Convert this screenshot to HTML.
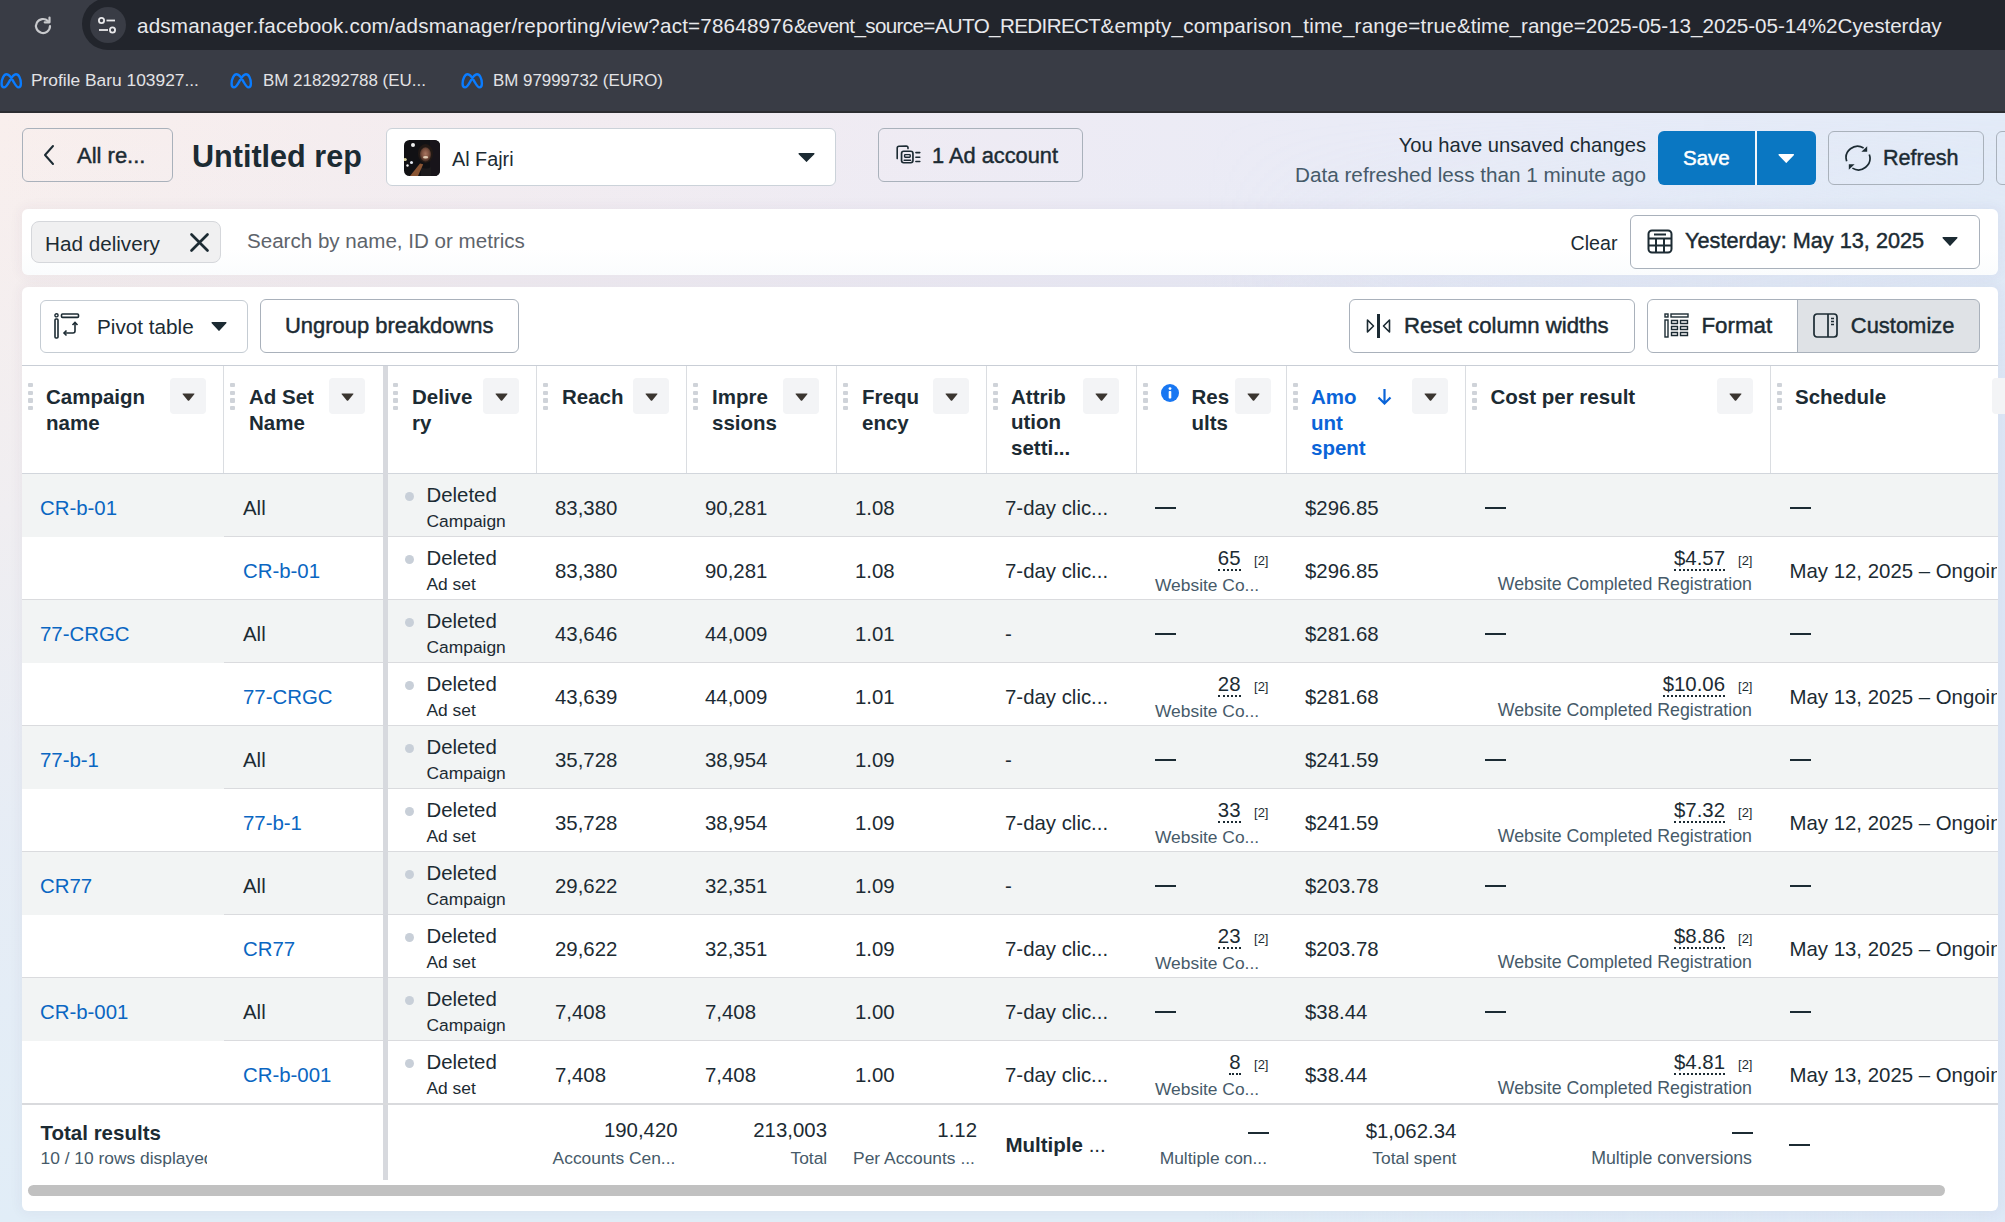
<!DOCTYPE html><html><head><meta charset="utf-8"><style>
html,body{margin:0;padding:0;}
body{width:2005px;height:1222px;position:relative;overflow:hidden;font-family:"Liberation Sans",sans-serif;background:#fff;}
.t{position:absolute;white-space:nowrap;line-height:1;}
.a{position:absolute;}
</style></head><body>
<div style="position:absolute;left:0px;top:0px;width:2005px;height:112px;background:#393c45;"></div>
<div style="position:absolute;left:82px;top:-2px;width:1960px;height:52px;background:#22252c;border-radius:26px;"></div>
<div style="position:absolute;left:0px;top:111px;width:2005px;height:2px;background:#2c2d31;"></div>
<svg class="a" style="left:31px;top:14px" width="24" height="24" viewBox="0 0 24 24"><path d="M19 12a7 7 0 1 1-2.05-4.95" fill="none" stroke="#c8c9cc" stroke-width="2.2" stroke-linecap="round"/><path d="M18.5 3.5v4.8h-4.8" fill="none" stroke="#c8c9cc" stroke-width="2.2" stroke-linecap="round" stroke-linejoin="round"/></svg>
<div style="position:absolute;left:90px;top:7px;width:36px;height:36px;background:#393c45;border-radius:50%;"></div>
<svg class="a" style="left:97px;top:16px" width="22" height="20" viewBox="0 0 22 20"><circle cx="4.5" cy="4.5" r="2.6" fill="none" stroke="#e8e8ea" stroke-width="1.8"/><line x1="9.5" y1="4.5" x2="18" y2="4.5" stroke="#e8e8ea" stroke-width="1.8"/><line x1="2" y1="14" x2="11" y2="14" stroke="#e8e8ea" stroke-width="1.8"/><circle cx="15.5" cy="14" r="2.6" fill="none" stroke="#e8e8ea" stroke-width="1.8"/></svg>
<div class="t" style="left:137px;top:15.53px;font-size:20.64px;font-weight:400;color:#e8e9ec;letter-spacing:0.187px;">adsmanager.facebook.com/adsmanager/reporting/view?act=78648976</div>
<div class="t" style="left:794px;top:15.53px;font-size:20.64px;font-weight:400;color:#e8e9ec;letter-spacing:-0.636px;">&amp;event_source=AUTO_REDIRECT</div>
<div class="t" style="left:1100.5px;top:15.53px;font-size:20.64px;font-weight:400;color:#e8e9ec;letter-spacing:0.182px;">&amp;empty_comparison_time_range=true</div>
<div class="t" style="left:1457px;top:15.53px;font-size:20.64px;font-weight:400;color:#e8e9ec;letter-spacing:-0.021px;">&amp;time_range=2025-05-13_2025-05-14%2Cyesterday</div>
<svg class="a" style="left:-1px;top:71.5px" width="24" height="18" viewBox="0 0 24 18"><path d="M2.6 11.8C2.6 6.5 5 2.3 7.6 2.3c2.6 0 4.6 3.2 6.6 6.8 2 3.6 3.3 6.3 5.3 6.3 1.6 0 2.4-1.5 2.4-3.8 0-5.2-2.3-9.3-4.9-9.3-2.5 0-4.5 3.2-6.5 6.8-2 3.6-3.4 6.3-5.5 6.3-1.6 0-2.4-1.4-2.4-3.6z" fill="none" stroke="#0a7cff" stroke-width="2.4" stroke-linejoin="round"/></svg>
<div class="t" style="left:31px;top:72.30px;font-size:17.37px;font-weight:400;color:#e3e3e6;">Profile Baru 103927...</div>
<svg class="a" style="left:229px;top:71.5px" width="24" height="18" viewBox="0 0 24 18"><path d="M2.6 11.8C2.6 6.5 5 2.3 7.6 2.3c2.6 0 4.6 3.2 6.6 6.8 2 3.6 3.3 6.3 5.3 6.3 1.6 0 2.4-1.5 2.4-3.8 0-5.2-2.3-9.3-4.9-9.3-2.5 0-4.5 3.2-6.5 6.8-2 3.6-3.4 6.3-5.5 6.3-1.6 0-2.4-1.4-2.4-3.6z" fill="none" stroke="#0a7cff" stroke-width="2.4" stroke-linejoin="round"/></svg>
<div class="t" style="left:263px;top:72.66px;font-size:16.94px;font-weight:400;color:#e3e3e6;">BM 218292788 (EU...</div>
<svg class="a" style="left:460px;top:71.5px" width="24" height="18" viewBox="0 0 24 18"><path d="M2.6 11.8C2.6 6.5 5 2.3 7.6 2.3c2.6 0 4.6 3.2 6.6 6.8 2 3.6 3.3 6.3 5.3 6.3 1.6 0 2.4-1.5 2.4-3.8 0-5.2-2.3-9.3-4.9-9.3-2.5 0-4.5 3.2-6.5 6.8-2 3.6-3.4 6.3-5.5 6.3-1.6 0-2.4-1.4-2.4-3.6z" fill="none" stroke="#0a7cff" stroke-width="2.4" stroke-linejoin="round"/></svg>
<div class="t" style="left:493px;top:72.69px;font-size:16.9px;font-weight:400;color:#e3e3e6;">BM 97999732 (EURO)</div>
<div class="a" style="left:0;top:113px;width:2005px;height:1109px;background:linear-gradient(90deg,#f9efed 0%,#f3ecf0 25%,#eeebf4 50%,#e8ebf7 75%,#e3ebf8 100%);"></div>
<div class="a" style="left:0;top:113px;width:2005px;height:1109px;background:linear-gradient(180deg,rgba(224,236,248,0) 0%,rgba(224,236,248,0.35) 35%,rgba(224,236,248,0.75) 65%,rgba(225,237,247,1) 100%);"></div>
<div class="a" style="left:0;top:113px;width:2005px;height:1109px;background:linear-gradient(90deg,rgba(220,231,246,0) 60%,rgba(220,231,246,0.8) 100%);-webkit-mask-image:linear-gradient(180deg,transparent 0%,#000 25%);mask-image:linear-gradient(180deg,transparent 0%,#000 25%);"></div>
<div style="position:absolute;left:22px;top:128px;width:151px;height:54px;box-sizing:border-box;background:transparent;border:1px solid #a9b1bb;border-radius:6px;"></div>
<svg class="a" style="left:42px;top:144px" width="14" height="22" viewBox="0 0 14 22"><path d="M11 2L3 11l8 9" fill="none" stroke="#1c2b33" stroke-width="2" stroke-linecap="round" stroke-linejoin="round"/></svg>
<div class="t" style="left:77px;top:144.88px;font-size:22.0px;font-weight:400;color:#1c2b33;-webkit-text-stroke:0.45px #1c2b33;">All re...</div>
<div class="t" style="left:192px;top:141.11px;font-size:30.58px;font-weight:700;color:#1c2b33;">Untitled rep</div>
<div style="position:absolute;left:386px;top:128px;width:450px;height:58px;box-sizing:border-box;background:#fff;border:1px solid #cbd2d9;border-radius:6px;"></div>
<svg class="a" style="left:404px;top:140px" width="36" height="36" viewBox="0 0 36 36"><defs><clipPath id="avc"><rect width="36" height="36" rx="5.5"/></clipPath><radialGradient id="fg" cx="0.5" cy="0.45" r="0.55"><stop offset="0" stop-color="#a87560"/><stop offset="0.6" stop-color="#7a4f3e"/><stop offset="1" stop-color="#3a261e"/></radialGradient></defs><g clip-path="url(#avc)"><rect width="36" height="36" fill="#111114"/><rect x="26" y="0" width="10" height="36" fill="#18141a"/><ellipse cx="21.5" cy="13.5" rx="7.5" ry="9.5" fill="#221915"/><ellipse cx="21.5" cy="14.5" rx="5.6" ry="7.2" fill="url(#fg)"/><ellipse cx="21.6" cy="17.3" rx="2.6" ry="1.2" fill="#e2ccb4"/><path d="M17 27q5 3 10 0v9H17z" fill="#1c1a1c"/><path d="M6 36l10-12.5 3.2 0.8-5.2 11.7z" fill="#8a5533"/><circle cx="9" cy="5" r="2" fill="#f0f0f0"/><circle cx="1.2" cy="19.5" r="1.6" fill="#dcd6a0"/><circle cx="7.5" cy="22.5" r="1.5" fill="#e8eef5"/><circle cx="3.5" cy="25.5" r="1.2" fill="#f5f5f5"/></g></svg>
<div class="t" style="left:452px;top:150.23px;font-size:19.81px;font-weight:400;color:#1c2b33;">Al Fajri</div>
<svg class="a" style="left:798px;top:153px" width="17" height="9.5" viewBox="0 0 17 9.5"><path d="M1.14 0H15.86Q17 0 16.32 1.37L9.30 8.36Q8.5 9.5 7.70 8.36L0.68 1.37Q0 0 1.14 0z" fill="#1c2b33"/></svg>
<div style="position:absolute;left:878px;top:128px;width:205px;height:54px;box-sizing:border-box;background:transparent;border:1px solid #a9b1bb;border-radius:6px;"></div>
<svg class="a" style="left:895px;top:144px" width="26" height="21" viewBox="0 0 26 21"><path d="M2.2 14.6V4.2Q2.2 2.4 4 2.3L11.2 2Q13 2 13 3.8V4.6" fill="none" stroke="#1c2b33" stroke-width="1.6" stroke-linecap="round"/><rect x="6.55" y="7.25" width="11.4" height="11.5" rx="2.2" fill="none" stroke="#1c2b33" stroke-width="1.7"/><rect x="9.6" y="10.6" width="5.6" height="2.6" rx="0.6" fill="none" stroke="#1c2b33" stroke-width="1.4"/><path d="M9.2 16.2h6.4M20.9 8.6h3.9M20.9 13.3h3.9M20.9 17.5h3.9" stroke="#1c2b33" stroke-width="1.6" stroke-linecap="round"/></svg>
<div class="t" style="left:932px;top:144.55px;font-size:21.8px;font-weight:400;color:#1c2b33;-webkit-text-stroke:0.45px #1c2b33;">1 Ad account</div>
<div class="t" style="right:359px;top:134.70px;font-size:20.2px;font-weight:400;color:#1c2b33;">You have unsaved changes</div>
<div class="t" style="right:359px;top:164.67px;font-size:20.71px;font-weight:400;color:#465a69;">Data refreshed less than 1 minute ago</div>
<div style="position:absolute;left:1658px;top:131px;width:158px;height:54px;background:#0a77c2;border-radius:6px;"></div>
<div style="position:absolute;left:1755px;top:131px;width:1.5px;height:54px;background:#f2f6fa;"></div>
<div class="t" style="left:1683px;top:147.65px;font-size:20.5px;font-weight:400;color:#fff;-webkit-text-stroke:0.5px #fff;">Save</div>
<svg class="a" style="left:1778px;top:153.5px" width="16.5" height="9.5" viewBox="0 0 16.5 9.5"><path d="M1.14 0H15.36Q16.5 0 15.82 1.37L9.05 8.36Q8.25 9.5 7.45 8.36L0.68 1.37Q0 0 1.14 0z" fill="#fff"/></svg>
<div style="position:absolute;left:1828px;top:131px;width:156px;height:54px;box-sizing:border-box;background:transparent;border:1px solid #a9b1bb;border-radius:6px;"></div>
<svg class="a" style="left:1845px;top:145px" width="26" height="26" viewBox="0 0 26 26"><path d="M1.7 16.3A11.5 11.5 0 0 1 18.6 2.9" fill="none" stroke="#1c2b33" stroke-width="1.7"/><path d="M22.2 1.2V6.8H16.4z" fill="#1c2b33"/><path d="M24.3 9.6A11.5 11.5 0 0 1 7.4 23.1" fill="none" stroke="#1c2b33" stroke-width="1.7"/><path d="M3.8 24.8V19.2H9.6z" fill="#1c2b33"/></svg>
<div class="t" style="left:1883px;top:146.72px;font-size:21.6px;font-weight:400;color:#1c2b33;-webkit-text-stroke:0.45px #1c2b33;">Refresh</div>
<div style="position:absolute;left:1996px;top:131px;width:40px;height:54px;box-sizing:border-box;background:transparent;border:1px solid #a9b1bb;border-radius:6px;"></div>
<div style="position:absolute;left:22px;top:209px;width:1976px;height:66px;background:linear-gradient(180deg,#fff 60%,#fafcfd 100%);border-radius:6px;box-shadow:0 0 12px 3px rgba(70,50,90,0.045);"></div>
<div style="position:absolute;left:31px;top:221px;width:190px;height:42px;box-sizing:border-box;background:#f0f0f1;border:1px solid #d5d7db;border-radius:8px;"></div>
<div class="t" style="left:45px;top:233.99px;font-size:20.68px;font-weight:400;color:#1c2b33;">Had delivery</div>
<svg class="a" style="left:189px;top:232px" width="21" height="21" viewBox="0 0 21 21"><path d="M2.5 2.5l16 16M18.5 2.5l-16 16" stroke="#1c2b33" stroke-width="2.7" stroke-linecap="round"/></svg>
<div class="t" style="left:247px;top:231.07px;font-size:20.59px;font-weight:400;color:#5e646b;">Search by name, ID or metrics</div>
<div class="t" style="left:1570.5px;top:233.95px;font-size:19.67px;font-weight:400;color:#1c2b33;">Clear</div>
<div style="position:absolute;left:1630px;top:215px;width:350px;height:54px;box-sizing:border-box;background:#fff;border:1px solid #a9b1bb;border-radius:6px;"></div>
<svg class="a" style="left:1647px;top:229px" width="26" height="25" viewBox="0 0 26 25"><rect x="1.5" y="1.5" width="23" height="22" rx="3.5" fill="none" stroke="#1c2b33" stroke-width="2"/><path d="M1.5 9.5h23M1.5 16.5h23M9 9.5v14M17 9.5v14M7 5.5h12" stroke="#1c2b33" stroke-width="2"/></svg>
<div class="t" style="left:1685px;top:230.33px;font-size:21.7px;font-weight:400;color:#1c2b33;-webkit-text-stroke:0.45px #1c2b33;">Yesterday: May 13, 2025</div>
<svg class="a" style="left:1942px;top:237px" width="16" height="9.5" viewBox="0 0 16 9.5"><path d="M1.14 0H14.86Q16 0 15.32 1.37L8.80 8.36Q8.0 9.5 7.20 8.36L0.68 1.37Q0 0 1.14 0z" fill="#1c2b33"/></svg>
<div style="position:absolute;left:22px;top:287px;width:1976px;height:924px;background:#fff;border-radius:6px;box-shadow:0 0 12px 3px rgba(70,50,90,0.045);"></div>
<div style="position:absolute;left:40px;top:300px;width:208px;height:53px;box-sizing:border-box;background:transparent;border:1px solid #c5ccd3;border-radius:6px;"></div>
<svg class="a" style="left:54px;top:313px" width="26" height="26" viewBox="0 0 26 26"><rect x="1" y="6" width="3" height="19" rx="1" fill="none" stroke="#1c2b33" stroke-width="1.6"/><circle cx="2.5" cy="2.3" r="1.6" fill="none" stroke="#1c2b33" stroke-width="1.4"/><rect x="7.5" y="1" width="17" height="3.4" rx="1" fill="none" stroke="#1c2b33" stroke-width="1.6"/><path d="M21 10v8a2 2 0 0 1-2 2h-9" fill="none" stroke="#1c2b33" stroke-width="1.6"/><path d="M18.5 12l2.5-2.5 2.5 2.5M12.5 17.5l-2.5 2.5 2.5 2.5" fill="none" stroke="#1c2b33" stroke-width="1.6"/></svg>
<div class="t" style="left:97px;top:317.27px;font-size:20.71px;font-weight:400;color:#1c2b33;">Pivot table</div>
<svg class="a" style="left:211px;top:321.5px" width="16" height="9.5" viewBox="0 0 16 9.5"><path d="M1.14 0H14.86Q16 0 15.32 1.37L8.80 8.36Q8.0 9.5 7.20 8.36L0.68 1.37Q0 0 1.14 0z" fill="#1c2b33"/></svg>
<div style="position:absolute;left:260px;top:299px;width:259px;height:54px;box-sizing:border-box;background:transparent;border:1px solid #a9b1bb;border-radius:6px;"></div>
<div class="t" style="left:285px;top:315.22px;font-size:21.95px;font-weight:400;color:#1c2b33;-webkit-text-stroke:0.45px #1c2b33;">Ungroup breakdowns</div>
<div style="position:absolute;left:1349px;top:299px;width:286px;height:54px;box-sizing:border-box;background:transparent;border:1px solid #a9b1bb;border-radius:6px;"></div>
<svg class="a" style="left:1366px;top:314px" width="25" height="24" viewBox="0 0 25 24"><path d="M1.5 6l6 6-6 6z" fill="none" stroke="#1c2b33" stroke-width="1.6" stroke-linejoin="round"/><path d="M23.5 6l-6 6 6 6z" fill="none" stroke="#1c2b33" stroke-width="1.6" stroke-linejoin="round"/><rect x="11" y="0" width="3" height="24" fill="#1c2b33"/></svg>
<div class="t" style="left:1404px;top:315.01px;font-size:22.2px;font-weight:400;color:#1c2b33;-webkit-text-stroke:0.45px #1c2b33;">Reset column widths</div>
<div style="position:absolute;left:1647px;top:299px;width:333px;height:54px;box-sizing:border-box;border:1px solid #a9b1bb;border-radius:6px;background:linear-gradient(90deg,#fff 0,#fff 150px,#dfe2e6 150px);"></div>
<div style="position:absolute;left:1797px;top:300px;width:1px;height:52px;background:#a9b1bb;"></div>
<svg class="a" style="left:1664px;top:313px" width="25" height="25" viewBox="0 0 25 25"><rect x="1" y="1" width="3" height="3" fill="none" stroke="#1c2b33" stroke-width="1.4"/><rect x="1" y="7" width="3" height="17" fill="none" stroke="#1c2b33" stroke-width="1.4"/><rect x="7" y="1" width="17" height="3" fill="none" stroke="#1c2b33" stroke-width="1.4"/><path d="M7.5 7.5h6v3h-6zM16.5 7.5h7v3h-7zM7.5 13.5h6v3h-6zM16.5 13.5h7v3h-7zM7.5 19.5h6v3h-6zM16.5 19.5h7v3h-7z" fill="none" stroke="#1c2b33" stroke-width="1.4"/></svg>
<div class="t" style="left:1701.5px;top:314.92px;font-size:22.3px;font-weight:400;color:#1c2b33;-webkit-text-stroke:0.45px #1c2b33;">Format</div>
<svg class="a" style="left:1813px;top:313px" width="25" height="25" viewBox="0 0 25 25"><rect x="1" y="1" width="23" height="23" rx="3" fill="none" stroke="#1c2b33" stroke-width="1.7"/><path d="M15 1v23" stroke="#1c2b33" stroke-width="1.7"/><path d="M18 5.5h3M18 8.5h3M18 11.5h3" stroke="#1c2b33" stroke-width="1.3"/></svg>
<div class="t" style="left:1850.8px;top:315.22px;font-size:21.95px;font-weight:400;color:#1c2b33;-webkit-text-stroke:0.45px #1c2b33;">Customize</div>
<div style="position:absolute;left:22px;top:365px;width:1976px;height:1px;background:#c9ced6;"></div>
<div style="position:absolute;left:22px;top:473px;width:1976px;height:1px;background:#d2d6dc;"></div>
<div style="position:absolute;left:223px;top:366px;width:1px;height:107px;background:#dadde1;"></div>
<div style="position:absolute;left:536px;top:366px;width:1px;height:107px;background:#dadde1;"></div>
<div style="position:absolute;left:686px;top:366px;width:1px;height:107px;background:#dadde1;"></div>
<div style="position:absolute;left:836px;top:366px;width:1px;height:107px;background:#dadde1;"></div>
<div style="position:absolute;left:986px;top:366px;width:1px;height:107px;background:#dadde1;"></div>
<div style="position:absolute;left:1136px;top:366px;width:1px;height:107px;background:#dadde1;"></div>
<div style="position:absolute;left:1286px;top:366px;width:1px;height:107px;background:#dadde1;"></div>
<div style="position:absolute;left:1465px;top:366px;width:1px;height:107px;background:#dadde1;"></div>
<div style="position:absolute;left:1770px;top:366px;width:1px;height:107px;background:#dadde1;"></div>
<div style="position:absolute;left:28px;top:383.0px;width:5px;height:4.4px;background:#cfd3d9;border-radius:1px;"></div>
<div style="position:absolute;left:28px;top:390.7px;width:5px;height:4.4px;background:#cfd3d9;border-radius:1px;"></div>
<div style="position:absolute;left:28px;top:398.4px;width:5px;height:4.4px;background:#cfd3d9;border-radius:1px;"></div>
<div style="position:absolute;left:28px;top:406.1px;width:5px;height:4.4px;background:#cfd3d9;border-radius:1px;"></div>
<div class="t" style="left:46px;top:386.65px;font-size:20.5px;font-weight:700;color:#1c2b33;">Campaign</div>
<div class="t" style="left:46px;top:412.65px;font-size:20.5px;font-weight:700;color:#1c2b33;">name</div>
<div style="position:absolute;left:170px;top:378px;width:36px;height:36px;background:#f3f4f6;border-radius:4px;"></div>
<svg class="a" style="left:181.7px;top:393px" width="13" height="8" viewBox="0 0 13 8"><path d="M1.2 0.4h10.6q1.2 0 .5 .9L7.2 7.4q-.7 .8-1.4 0L.7 1.3Q0 .4 1.2 .4z" fill="#3a3530"/></svg>
<div style="position:absolute;left:230px;top:383.0px;width:5px;height:4.4px;background:#cfd3d9;border-radius:1px;"></div>
<div style="position:absolute;left:230px;top:390.7px;width:5px;height:4.4px;background:#cfd3d9;border-radius:1px;"></div>
<div style="position:absolute;left:230px;top:398.4px;width:5px;height:4.4px;background:#cfd3d9;border-radius:1px;"></div>
<div style="position:absolute;left:230px;top:406.1px;width:5px;height:4.4px;background:#cfd3d9;border-radius:1px;"></div>
<div class="t" style="left:249px;top:386.65px;font-size:20.5px;font-weight:700;color:#1c2b33;">Ad Set</div>
<div class="t" style="left:249px;top:412.65px;font-size:20.5px;font-weight:700;color:#1c2b33;">Name</div>
<div style="position:absolute;left:329px;top:378px;width:36px;height:36px;background:#f3f4f6;border-radius:4px;"></div>
<svg class="a" style="left:340.7px;top:393px" width="13" height="8" viewBox="0 0 13 8"><path d="M1.2 0.4h10.6q1.2 0 .5 .9L7.2 7.4q-.7 .8-1.4 0L.7 1.3Q0 .4 1.2 .4z" fill="#3a3530"/></svg>
<div style="position:absolute;left:393px;top:383.0px;width:5px;height:4.4px;background:#cfd3d9;border-radius:1px;"></div>
<div style="position:absolute;left:393px;top:390.7px;width:5px;height:4.4px;background:#cfd3d9;border-radius:1px;"></div>
<div style="position:absolute;left:393px;top:398.4px;width:5px;height:4.4px;background:#cfd3d9;border-radius:1px;"></div>
<div style="position:absolute;left:393px;top:406.1px;width:5px;height:4.4px;background:#cfd3d9;border-radius:1px;"></div>
<div class="t" style="left:412px;top:386.65px;font-size:20.5px;font-weight:700;color:#1c2b33;">Delive</div>
<div class="t" style="left:412px;top:412.65px;font-size:20.5px;font-weight:700;color:#1c2b33;">ry</div>
<div style="position:absolute;left:483px;top:378px;width:36px;height:36px;background:#f3f4f6;border-radius:4px;"></div>
<svg class="a" style="left:494.7px;top:393px" width="13" height="8" viewBox="0 0 13 8"><path d="M1.2 0.4h10.6q1.2 0 .5 .9L7.2 7.4q-.7 .8-1.4 0L.7 1.3Q0 .4 1.2 .4z" fill="#3a3530"/></svg>
<div style="position:absolute;left:543px;top:383.0px;width:5px;height:4.4px;background:#cfd3d9;border-radius:1px;"></div>
<div style="position:absolute;left:543px;top:390.7px;width:5px;height:4.4px;background:#cfd3d9;border-radius:1px;"></div>
<div style="position:absolute;left:543px;top:398.4px;width:5px;height:4.4px;background:#cfd3d9;border-radius:1px;"></div>
<div style="position:absolute;left:543px;top:406.1px;width:5px;height:4.4px;background:#cfd3d9;border-radius:1px;"></div>
<div class="t" style="left:562px;top:386.65px;font-size:20.5px;font-weight:700;color:#1c2b33;">Reach</div>
<div style="position:absolute;left:633px;top:378px;width:36px;height:36px;background:#f3f4f6;border-radius:4px;"></div>
<svg class="a" style="left:644.7px;top:393px" width="13" height="8" viewBox="0 0 13 8"><path d="M1.2 0.4h10.6q1.2 0 .5 .9L7.2 7.4q-.7 .8-1.4 0L.7 1.3Q0 .4 1.2 .4z" fill="#3a3530"/></svg>
<div style="position:absolute;left:693px;top:383.0px;width:5px;height:4.4px;background:#cfd3d9;border-radius:1px;"></div>
<div style="position:absolute;left:693px;top:390.7px;width:5px;height:4.4px;background:#cfd3d9;border-radius:1px;"></div>
<div style="position:absolute;left:693px;top:398.4px;width:5px;height:4.4px;background:#cfd3d9;border-radius:1px;"></div>
<div style="position:absolute;left:693px;top:406.1px;width:5px;height:4.4px;background:#cfd3d9;border-radius:1px;"></div>
<div class="t" style="left:712px;top:386.65px;font-size:20.5px;font-weight:700;color:#1c2b33;">Impre</div>
<div class="t" style="left:712px;top:412.65px;font-size:20.5px;font-weight:700;color:#1c2b33;">ssions</div>
<div style="position:absolute;left:783px;top:378px;width:36px;height:36px;background:#f3f4f6;border-radius:4px;"></div>
<svg class="a" style="left:794.7px;top:393px" width="13" height="8" viewBox="0 0 13 8"><path d="M1.2 0.4h10.6q1.2 0 .5 .9L7.2 7.4q-.7 .8-1.4 0L.7 1.3Q0 .4 1.2 .4z" fill="#3a3530"/></svg>
<div style="position:absolute;left:843px;top:383.0px;width:5px;height:4.4px;background:#cfd3d9;border-radius:1px;"></div>
<div style="position:absolute;left:843px;top:390.7px;width:5px;height:4.4px;background:#cfd3d9;border-radius:1px;"></div>
<div style="position:absolute;left:843px;top:398.4px;width:5px;height:4.4px;background:#cfd3d9;border-radius:1px;"></div>
<div style="position:absolute;left:843px;top:406.1px;width:5px;height:4.4px;background:#cfd3d9;border-radius:1px;"></div>
<div class="t" style="left:862px;top:386.65px;font-size:20.5px;font-weight:700;color:#1c2b33;">Frequ</div>
<div class="t" style="left:862px;top:412.65px;font-size:20.5px;font-weight:700;color:#1c2b33;">ency</div>
<div style="position:absolute;left:933px;top:378px;width:36px;height:36px;background:#f3f4f6;border-radius:4px;"></div>
<svg class="a" style="left:944.7px;top:393px" width="13" height="8" viewBox="0 0 13 8"><path d="M1.2 0.4h10.6q1.2 0 .5 .9L7.2 7.4q-.7 .8-1.4 0L.7 1.3Q0 .4 1.2 .4z" fill="#3a3530"/></svg>
<div style="position:absolute;left:993px;top:383.0px;width:5px;height:4.4px;background:#cfd3d9;border-radius:1px;"></div>
<div style="position:absolute;left:993px;top:390.7px;width:5px;height:4.4px;background:#cfd3d9;border-radius:1px;"></div>
<div style="position:absolute;left:993px;top:398.4px;width:5px;height:4.4px;background:#cfd3d9;border-radius:1px;"></div>
<div style="position:absolute;left:993px;top:406.1px;width:5px;height:4.4px;background:#cfd3d9;border-radius:1px;"></div>
<div class="t" style="left:1011px;top:386.65px;font-size:20.5px;font-weight:700;color:#1c2b33;">Attrib</div>
<div class="t" style="left:1011px;top:412.15px;font-size:20.5px;font-weight:700;color:#1c2b33;">ution</div>
<div class="t" style="left:1011px;top:437.65px;font-size:20.5px;font-weight:700;color:#1c2b33;">setti...</div>
<div style="position:absolute;left:1083px;top:378px;width:36px;height:36px;background:#f3f4f6;border-radius:4px;"></div>
<svg class="a" style="left:1094.7px;top:393px" width="13" height="8" viewBox="0 0 13 8"><path d="M1.2 0.4h10.6q1.2 0 .5 .9L7.2 7.4q-.7 .8-1.4 0L.7 1.3Q0 .4 1.2 .4z" fill="#3a3530"/></svg>
<div style="position:absolute;left:1143px;top:383.0px;width:5px;height:4.4px;background:#cfd3d9;border-radius:1px;"></div>
<div style="position:absolute;left:1143px;top:390.7px;width:5px;height:4.4px;background:#cfd3d9;border-radius:1px;"></div>
<div style="position:absolute;left:1143px;top:398.4px;width:5px;height:4.4px;background:#cfd3d9;border-radius:1px;"></div>
<div style="position:absolute;left:1143px;top:406.1px;width:5px;height:4.4px;background:#cfd3d9;border-radius:1px;"></div>
<svg class="a" style="left:1161px;top:384px" width="18" height="18" viewBox="0 0 18 18"><circle cx="9" cy="9" r="9" fill="#1877f2"/><circle cx="9" cy="4.6" r="1.4" fill="#fff"/><rect x="7.7" y="7" width="2.6" height="7.5" rx="0.8" fill="#fff"/></svg>
<div class="t" style="left:1191.5px;top:386.65px;font-size:20.5px;font-weight:700;color:#1c2b33;">Res</div>
<div class="t" style="left:1191.5px;top:412.65px;font-size:20.5px;font-weight:700;color:#1c2b33;">ults</div>
<div style="position:absolute;left:1235px;top:378px;width:36px;height:36px;background:#f3f4f6;border-radius:4px;"></div>
<svg class="a" style="left:1246.7px;top:393px" width="13" height="8" viewBox="0 0 13 8"><path d="M1.2 0.4h10.6q1.2 0 .5 .9L7.2 7.4q-.7 .8-1.4 0L.7 1.3Q0 .4 1.2 .4z" fill="#3a3530"/></svg>
<div style="position:absolute;left:1293px;top:383.0px;width:5px;height:4.4px;background:#cfd3d9;border-radius:1px;"></div>
<div style="position:absolute;left:1293px;top:390.7px;width:5px;height:4.4px;background:#cfd3d9;border-radius:1px;"></div>
<div style="position:absolute;left:1293px;top:398.4px;width:5px;height:4.4px;background:#cfd3d9;border-radius:1px;"></div>
<div style="position:absolute;left:1293px;top:406.1px;width:5px;height:4.4px;background:#cfd3d9;border-radius:1px;"></div>
<div class="t" style="left:1311px;top:386.65px;font-size:20.5px;font-weight:700;color:#0a64d8;">Amo</div>
<div class="t" style="left:1311px;top:412.65px;font-size:20.5px;font-weight:700;color:#0a64d8;">unt</div>
<div class="t" style="left:1311px;top:437.65px;font-size:20.5px;font-weight:700;color:#0a64d8;">spent</div>
<svg class="a" style="left:1377px;top:389px" width="15" height="16" viewBox="0 0 15 16"><path d="M7.5 0v14M1.5 8.5l6 6 6-6" fill="none" stroke="#0a64d8" stroke-width="2.2"/></svg>
<div style="position:absolute;left:1412px;top:378px;width:36px;height:36px;background:#f3f4f6;border-radius:4px;"></div>
<svg class="a" style="left:1423.7px;top:393px" width="13" height="8" viewBox="0 0 13 8"><path d="M1.2 0.4h10.6q1.2 0 .5 .9L7.2 7.4q-.7 .8-1.4 0L.7 1.3Q0 .4 1.2 .4z" fill="#3a3530"/></svg>
<div style="position:absolute;left:1472px;top:383.0px;width:5px;height:4.4px;background:#cfd3d9;border-radius:1px;"></div>
<div style="position:absolute;left:1472px;top:390.7px;width:5px;height:4.4px;background:#cfd3d9;border-radius:1px;"></div>
<div style="position:absolute;left:1472px;top:398.4px;width:5px;height:4.4px;background:#cfd3d9;border-radius:1px;"></div>
<div style="position:absolute;left:1472px;top:406.1px;width:5px;height:4.4px;background:#cfd3d9;border-radius:1px;"></div>
<div class="t" style="left:1490.5px;top:386.65px;font-size:20.5px;font-weight:700;color:#1c2b33;">Cost per result</div>
<div style="position:absolute;left:1717px;top:378px;width:36px;height:36px;background:#f3f4f6;border-radius:4px;"></div>
<svg class="a" style="left:1728.7px;top:393px" width="13" height="8" viewBox="0 0 13 8"><path d="M1.2 0.4h10.6q1.2 0 .5 .9L7.2 7.4q-.7 .8-1.4 0L.7 1.3Q0 .4 1.2 .4z" fill="#3a3530"/></svg>
<div style="position:absolute;left:1777px;top:383.0px;width:5px;height:4.4px;background:#cfd3d9;border-radius:1px;"></div>
<div style="position:absolute;left:1777px;top:390.7px;width:5px;height:4.4px;background:#cfd3d9;border-radius:1px;"></div>
<div style="position:absolute;left:1777px;top:398.4px;width:5px;height:4.4px;background:#cfd3d9;border-radius:1px;"></div>
<div style="position:absolute;left:1777px;top:406.1px;width:5px;height:4.4px;background:#cfd3d9;border-radius:1px;"></div>
<div class="t" style="left:1795px;top:386.65px;font-size:20.5px;font-weight:700;color:#1c2b33;">Schedule</div>
<div style="position:absolute;left:1992px;top:378px;width:36px;height:36px;background:#f3f4f6;border-radius:4px;"></div>
<div class="a" style="left:22px;top:474px;width:1976px;height:630px;overflow:hidden;">
</div>
<div style="position:absolute;left:22px;top:474px;width:1976px;height:62px;background:#f2f4f4;"></div>
<div style="position:absolute;left:224px;top:536px;width:1774px;height:1px;background:#dadbde;"></div>
<div style="position:absolute;left:22px;top:536px;width:202px;height:1px;background:#f2f4f4;"></div>
<div class="t" style="left:40px;top:497.73px;font-size:20.4px;font-weight:400;color:#0a66c2;">CR-b-01</div>
<div class="t" style="left:243px;top:497.73px;font-size:20.4px;font-weight:400;color:#1c2b33;">All</div>
<div style="position:absolute;left:405px;top:492px;width:9px;height:9px;background:#c8cfd8;border-radius:50%;"></div>
<div class="t" style="left:426.5px;top:484.53px;font-size:20.4px;font-weight:400;color:#1c2b33;">Deleted</div>
<div class="t" style="left:426.5px;top:512.77px;font-size:17.4px;font-weight:400;color:#1c2b33;">Campaign</div>
<div class="t" style="left:555px;top:497.73px;font-size:20.4px;font-weight:400;color:#1c2b33;">83,380</div>
<div class="t" style="left:705px;top:497.73px;font-size:20.4px;font-weight:400;color:#1c2b33;">90,281</div>
<div class="t" style="left:855px;top:497.73px;font-size:20.4px;font-weight:400;color:#1c2b33;">1.08</div>
<div class="t" style="left:1005px;top:497.73px;font-size:20.4px;font-weight:400;color:#1c2b33;">7-day clic...</div>
<div style="position:absolute;left:1155px;top:507px;width:21px;height:1.6px;background:#1c2b33;"></div>
<div class="t" style="left:1305px;top:497.73px;font-size:20.4px;font-weight:400;color:#1c2b33;">$296.85</div>
<div style="position:absolute;left:1485px;top:507px;width:21px;height:1.6px;background:#1c2b33;"></div>
<div style="position:absolute;left:1790px;top:507px;width:21px;height:1.6px;background:#1c2b33;"></div>
<div style="position:absolute;left:22px;top:599px;width:1976px;height:1px;background:#dadbde;"></div>
<div class="t" style="left:243px;top:560.73px;font-size:20.4px;font-weight:400;color:#0a66c2;">CR-b-01</div>
<div style="position:absolute;left:405px;top:555px;width:9px;height:9px;background:#c8cfd8;border-radius:50%;"></div>
<div class="t" style="left:426.5px;top:547.53px;font-size:20.4px;font-weight:400;color:#1c2b33;">Deleted</div>
<div class="t" style="left:426.5px;top:575.77px;font-size:17.4px;font-weight:400;color:#1c2b33;">Ad set</div>
<div class="t" style="left:555px;top:560.73px;font-size:20.4px;font-weight:400;color:#1c2b33;">83,380</div>
<div class="t" style="left:705px;top:560.73px;font-size:20.4px;font-weight:400;color:#1c2b33;">90,281</div>
<div class="t" style="left:855px;top:560.73px;font-size:20.4px;font-weight:400;color:#1c2b33;">1.08</div>
<div class="t" style="left:1005px;top:560.73px;font-size:20.4px;font-weight:400;color:#1c2b33;">7-day clic...</div>
<div class="t" style="right:764.5px;top:548.33px;font-size:20.4px;font-weight:400;color:#1c2b33;border-bottom:2px dotted #1c2b33;line-height:1.02;">65</div>
<div class="t" style="right:736.5px;top:553.80px;font-size:13px;font-weight:400;color:#1c2b33;">[2]</div>
<div class="t" style="left:1155px;top:577.27px;font-size:17.4px;font-weight:400;color:#465a69;">Website Co...</div>
<div class="t" style="left:1305px;top:560.73px;font-size:20.4px;font-weight:400;color:#1c2b33;">$296.85</div>
<div class="t" style="right:280px;top:548.13px;font-size:20.4px;font-weight:400;color:#1c2b33;border-bottom:2px dotted #1c2b33;line-height:1.02;">$4.57</div>
<div class="t" style="right:252.5px;top:553.80px;font-size:13px;font-weight:400;color:#1c2b33;">[2]</div>
<div class="t" style="right:253px;top:575.97px;font-size:17.75px;font-weight:400;color:#465a69;">Website Completed Registration</div>
<div class="a" style="left:1789px;top:537px;width:208px;height:62px;overflow:hidden;"><div class="t" style="left:0.5px;top:23.73px;font-size:20.4px;color:#1c2b33;">May 12, 2025 – Ongoing</div></div>
<div style="position:absolute;left:22px;top:600px;width:1976px;height:62px;background:#f2f4f4;"></div>
<div style="position:absolute;left:224px;top:662px;width:1774px;height:1px;background:#dadbde;"></div>
<div style="position:absolute;left:22px;top:662px;width:202px;height:1px;background:#f2f4f4;"></div>
<div class="t" style="left:40px;top:623.73px;font-size:20.4px;font-weight:400;color:#0a66c2;">77-CRGC</div>
<div class="t" style="left:243px;top:623.73px;font-size:20.4px;font-weight:400;color:#1c2b33;">All</div>
<div style="position:absolute;left:405px;top:618px;width:9px;height:9px;background:#c8cfd8;border-radius:50%;"></div>
<div class="t" style="left:426.5px;top:610.53px;font-size:20.4px;font-weight:400;color:#1c2b33;">Deleted</div>
<div class="t" style="left:426.5px;top:638.77px;font-size:17.4px;font-weight:400;color:#1c2b33;">Campaign</div>
<div class="t" style="left:555px;top:623.73px;font-size:20.4px;font-weight:400;color:#1c2b33;">43,646</div>
<div class="t" style="left:705px;top:623.73px;font-size:20.4px;font-weight:400;color:#1c2b33;">44,009</div>
<div class="t" style="left:855px;top:623.73px;font-size:20.4px;font-weight:400;color:#1c2b33;">1.01</div>
<div class="t" style="left:1005px;top:623.73px;font-size:20.4px;font-weight:400;color:#1c2b33;">-</div>
<div style="position:absolute;left:1155px;top:633px;width:21px;height:1.6px;background:#1c2b33;"></div>
<div class="t" style="left:1305px;top:623.73px;font-size:20.4px;font-weight:400;color:#1c2b33;">$281.68</div>
<div style="position:absolute;left:1485px;top:633px;width:21px;height:1.6px;background:#1c2b33;"></div>
<div style="position:absolute;left:1790px;top:633px;width:21px;height:1.6px;background:#1c2b33;"></div>
<div style="position:absolute;left:22px;top:725px;width:1976px;height:1px;background:#dadbde;"></div>
<div class="t" style="left:243px;top:686.73px;font-size:20.4px;font-weight:400;color:#0a66c2;">77-CRGC</div>
<div style="position:absolute;left:405px;top:681px;width:9px;height:9px;background:#c8cfd8;border-radius:50%;"></div>
<div class="t" style="left:426.5px;top:673.53px;font-size:20.4px;font-weight:400;color:#1c2b33;">Deleted</div>
<div class="t" style="left:426.5px;top:701.77px;font-size:17.4px;font-weight:400;color:#1c2b33;">Ad set</div>
<div class="t" style="left:555px;top:686.73px;font-size:20.4px;font-weight:400;color:#1c2b33;">43,639</div>
<div class="t" style="left:705px;top:686.73px;font-size:20.4px;font-weight:400;color:#1c2b33;">44,009</div>
<div class="t" style="left:855px;top:686.73px;font-size:20.4px;font-weight:400;color:#1c2b33;">1.01</div>
<div class="t" style="left:1005px;top:686.73px;font-size:20.4px;font-weight:400;color:#1c2b33;">7-day clic...</div>
<div class="t" style="right:764.5px;top:674.33px;font-size:20.4px;font-weight:400;color:#1c2b33;border-bottom:2px dotted #1c2b33;line-height:1.02;">28</div>
<div class="t" style="right:736.5px;top:679.80px;font-size:13px;font-weight:400;color:#1c2b33;">[2]</div>
<div class="t" style="left:1155px;top:703.27px;font-size:17.4px;font-weight:400;color:#465a69;">Website Co...</div>
<div class="t" style="left:1305px;top:686.73px;font-size:20.4px;font-weight:400;color:#1c2b33;">$281.68</div>
<div class="t" style="right:280px;top:674.13px;font-size:20.4px;font-weight:400;color:#1c2b33;border-bottom:2px dotted #1c2b33;line-height:1.02;">$10.06</div>
<div class="t" style="right:252.5px;top:679.80px;font-size:13px;font-weight:400;color:#1c2b33;">[2]</div>
<div class="t" style="right:253px;top:701.97px;font-size:17.75px;font-weight:400;color:#465a69;">Website Completed Registration</div>
<div class="a" style="left:1789px;top:663px;width:208px;height:62px;overflow:hidden;"><div class="t" style="left:0.5px;top:23.73px;font-size:20.4px;color:#1c2b33;">May 13, 2025 – Ongoing</div></div>
<div style="position:absolute;left:22px;top:726px;width:1976px;height:62px;background:#f2f4f4;"></div>
<div style="position:absolute;left:224px;top:788px;width:1774px;height:1px;background:#dadbde;"></div>
<div style="position:absolute;left:22px;top:788px;width:202px;height:1px;background:#f2f4f4;"></div>
<div class="t" style="left:40px;top:749.73px;font-size:20.4px;font-weight:400;color:#0a66c2;">77-b-1</div>
<div class="t" style="left:243px;top:749.73px;font-size:20.4px;font-weight:400;color:#1c2b33;">All</div>
<div style="position:absolute;left:405px;top:744px;width:9px;height:9px;background:#c8cfd8;border-radius:50%;"></div>
<div class="t" style="left:426.5px;top:736.53px;font-size:20.4px;font-weight:400;color:#1c2b33;">Deleted</div>
<div class="t" style="left:426.5px;top:764.77px;font-size:17.4px;font-weight:400;color:#1c2b33;">Campaign</div>
<div class="t" style="left:555px;top:749.73px;font-size:20.4px;font-weight:400;color:#1c2b33;">35,728</div>
<div class="t" style="left:705px;top:749.73px;font-size:20.4px;font-weight:400;color:#1c2b33;">38,954</div>
<div class="t" style="left:855px;top:749.73px;font-size:20.4px;font-weight:400;color:#1c2b33;">1.09</div>
<div class="t" style="left:1005px;top:749.73px;font-size:20.4px;font-weight:400;color:#1c2b33;">-</div>
<div style="position:absolute;left:1155px;top:759px;width:21px;height:1.6px;background:#1c2b33;"></div>
<div class="t" style="left:1305px;top:749.73px;font-size:20.4px;font-weight:400;color:#1c2b33;">$241.59</div>
<div style="position:absolute;left:1485px;top:759px;width:21px;height:1.6px;background:#1c2b33;"></div>
<div style="position:absolute;left:1790px;top:759px;width:21px;height:1.6px;background:#1c2b33;"></div>
<div style="position:absolute;left:22px;top:851px;width:1976px;height:1px;background:#dadbde;"></div>
<div class="t" style="left:243px;top:812.73px;font-size:20.4px;font-weight:400;color:#0a66c2;">77-b-1</div>
<div style="position:absolute;left:405px;top:807px;width:9px;height:9px;background:#c8cfd8;border-radius:50%;"></div>
<div class="t" style="left:426.5px;top:799.53px;font-size:20.4px;font-weight:400;color:#1c2b33;">Deleted</div>
<div class="t" style="left:426.5px;top:827.77px;font-size:17.4px;font-weight:400;color:#1c2b33;">Ad set</div>
<div class="t" style="left:555px;top:812.73px;font-size:20.4px;font-weight:400;color:#1c2b33;">35,728</div>
<div class="t" style="left:705px;top:812.73px;font-size:20.4px;font-weight:400;color:#1c2b33;">38,954</div>
<div class="t" style="left:855px;top:812.73px;font-size:20.4px;font-weight:400;color:#1c2b33;">1.09</div>
<div class="t" style="left:1005px;top:812.73px;font-size:20.4px;font-weight:400;color:#1c2b33;">7-day clic...</div>
<div class="t" style="right:764.5px;top:800.33px;font-size:20.4px;font-weight:400;color:#1c2b33;border-bottom:2px dotted #1c2b33;line-height:1.02;">33</div>
<div class="t" style="right:736.5px;top:805.80px;font-size:13px;font-weight:400;color:#1c2b33;">[2]</div>
<div class="t" style="left:1155px;top:829.27px;font-size:17.4px;font-weight:400;color:#465a69;">Website Co...</div>
<div class="t" style="left:1305px;top:812.73px;font-size:20.4px;font-weight:400;color:#1c2b33;">$241.59</div>
<div class="t" style="right:280px;top:800.13px;font-size:20.4px;font-weight:400;color:#1c2b33;border-bottom:2px dotted #1c2b33;line-height:1.02;">$7.32</div>
<div class="t" style="right:252.5px;top:805.80px;font-size:13px;font-weight:400;color:#1c2b33;">[2]</div>
<div class="t" style="right:253px;top:827.97px;font-size:17.75px;font-weight:400;color:#465a69;">Website Completed Registration</div>
<div class="a" style="left:1789px;top:789px;width:208px;height:62px;overflow:hidden;"><div class="t" style="left:0.5px;top:23.73px;font-size:20.4px;color:#1c2b33;">May 12, 2025 – Ongoing</div></div>
<div style="position:absolute;left:22px;top:852px;width:1976px;height:62px;background:#f2f4f4;"></div>
<div style="position:absolute;left:224px;top:914px;width:1774px;height:1px;background:#dadbde;"></div>
<div style="position:absolute;left:22px;top:914px;width:202px;height:1px;background:#f2f4f4;"></div>
<div class="t" style="left:40px;top:875.73px;font-size:20.4px;font-weight:400;color:#0a66c2;">CR77</div>
<div class="t" style="left:243px;top:875.73px;font-size:20.4px;font-weight:400;color:#1c2b33;">All</div>
<div style="position:absolute;left:405px;top:870px;width:9px;height:9px;background:#c8cfd8;border-radius:50%;"></div>
<div class="t" style="left:426.5px;top:862.53px;font-size:20.4px;font-weight:400;color:#1c2b33;">Deleted</div>
<div class="t" style="left:426.5px;top:890.77px;font-size:17.4px;font-weight:400;color:#1c2b33;">Campaign</div>
<div class="t" style="left:555px;top:875.73px;font-size:20.4px;font-weight:400;color:#1c2b33;">29,622</div>
<div class="t" style="left:705px;top:875.73px;font-size:20.4px;font-weight:400;color:#1c2b33;">32,351</div>
<div class="t" style="left:855px;top:875.73px;font-size:20.4px;font-weight:400;color:#1c2b33;">1.09</div>
<div class="t" style="left:1005px;top:875.73px;font-size:20.4px;font-weight:400;color:#1c2b33;">-</div>
<div style="position:absolute;left:1155px;top:885px;width:21px;height:1.6px;background:#1c2b33;"></div>
<div class="t" style="left:1305px;top:875.73px;font-size:20.4px;font-weight:400;color:#1c2b33;">$203.78</div>
<div style="position:absolute;left:1485px;top:885px;width:21px;height:1.6px;background:#1c2b33;"></div>
<div style="position:absolute;left:1790px;top:885px;width:21px;height:1.6px;background:#1c2b33;"></div>
<div style="position:absolute;left:22px;top:977px;width:1976px;height:1px;background:#dadbde;"></div>
<div class="t" style="left:243px;top:938.73px;font-size:20.4px;font-weight:400;color:#0a66c2;">CR77</div>
<div style="position:absolute;left:405px;top:933px;width:9px;height:9px;background:#c8cfd8;border-radius:50%;"></div>
<div class="t" style="left:426.5px;top:925.53px;font-size:20.4px;font-weight:400;color:#1c2b33;">Deleted</div>
<div class="t" style="left:426.5px;top:953.77px;font-size:17.4px;font-weight:400;color:#1c2b33;">Ad set</div>
<div class="t" style="left:555px;top:938.73px;font-size:20.4px;font-weight:400;color:#1c2b33;">29,622</div>
<div class="t" style="left:705px;top:938.73px;font-size:20.4px;font-weight:400;color:#1c2b33;">32,351</div>
<div class="t" style="left:855px;top:938.73px;font-size:20.4px;font-weight:400;color:#1c2b33;">1.09</div>
<div class="t" style="left:1005px;top:938.73px;font-size:20.4px;font-weight:400;color:#1c2b33;">7-day clic...</div>
<div class="t" style="right:764.5px;top:926.33px;font-size:20.4px;font-weight:400;color:#1c2b33;border-bottom:2px dotted #1c2b33;line-height:1.02;">23</div>
<div class="t" style="right:736.5px;top:931.80px;font-size:13px;font-weight:400;color:#1c2b33;">[2]</div>
<div class="t" style="left:1155px;top:955.27px;font-size:17.4px;font-weight:400;color:#465a69;">Website Co...</div>
<div class="t" style="left:1305px;top:938.73px;font-size:20.4px;font-weight:400;color:#1c2b33;">$203.78</div>
<div class="t" style="right:280px;top:926.13px;font-size:20.4px;font-weight:400;color:#1c2b33;border-bottom:2px dotted #1c2b33;line-height:1.02;">$8.86</div>
<div class="t" style="right:252.5px;top:931.80px;font-size:13px;font-weight:400;color:#1c2b33;">[2]</div>
<div class="t" style="right:253px;top:953.97px;font-size:17.75px;font-weight:400;color:#465a69;">Website Completed Registration</div>
<div class="a" style="left:1789px;top:915px;width:208px;height:62px;overflow:hidden;"><div class="t" style="left:0.5px;top:23.73px;font-size:20.4px;color:#1c2b33;">May 13, 2025 – Ongoing</div></div>
<div style="position:absolute;left:22px;top:978px;width:1976px;height:62px;background:#f2f4f4;"></div>
<div style="position:absolute;left:224px;top:1040px;width:1774px;height:1px;background:#dadbde;"></div>
<div style="position:absolute;left:22px;top:1040px;width:202px;height:1px;background:#f2f4f4;"></div>
<div class="t" style="left:40px;top:1001.73px;font-size:20.4px;font-weight:400;color:#0a66c2;">CR-b-001</div>
<div class="t" style="left:243px;top:1001.73px;font-size:20.4px;font-weight:400;color:#1c2b33;">All</div>
<div style="position:absolute;left:405px;top:996px;width:9px;height:9px;background:#c8cfd8;border-radius:50%;"></div>
<div class="t" style="left:426.5px;top:988.53px;font-size:20.4px;font-weight:400;color:#1c2b33;">Deleted</div>
<div class="t" style="left:426.5px;top:1016.77px;font-size:17.4px;font-weight:400;color:#1c2b33;">Campaign</div>
<div class="t" style="left:555px;top:1001.73px;font-size:20.4px;font-weight:400;color:#1c2b33;">7,408</div>
<div class="t" style="left:705px;top:1001.73px;font-size:20.4px;font-weight:400;color:#1c2b33;">7,408</div>
<div class="t" style="left:855px;top:1001.73px;font-size:20.4px;font-weight:400;color:#1c2b33;">1.00</div>
<div class="t" style="left:1005px;top:1001.73px;font-size:20.4px;font-weight:400;color:#1c2b33;">7-day clic...</div>
<div style="position:absolute;left:1155px;top:1011px;width:21px;height:1.6px;background:#1c2b33;"></div>
<div class="t" style="left:1305px;top:1001.73px;font-size:20.4px;font-weight:400;color:#1c2b33;">$38.44</div>
<div style="position:absolute;left:1485px;top:1011px;width:21px;height:1.6px;background:#1c2b33;"></div>
<div style="position:absolute;left:1790px;top:1011px;width:21px;height:1.6px;background:#1c2b33;"></div>
<div style="position:absolute;left:22px;top:1103px;width:1976px;height:1px;background:#dadbde;"></div>
<div class="t" style="left:243px;top:1064.73px;font-size:20.4px;font-weight:400;color:#0a66c2;">CR-b-001</div>
<div style="position:absolute;left:405px;top:1059px;width:9px;height:9px;background:#c8cfd8;border-radius:50%;"></div>
<div class="t" style="left:426.5px;top:1051.53px;font-size:20.4px;font-weight:400;color:#1c2b33;">Deleted</div>
<div class="t" style="left:426.5px;top:1079.77px;font-size:17.4px;font-weight:400;color:#1c2b33;">Ad set</div>
<div class="t" style="left:555px;top:1064.73px;font-size:20.4px;font-weight:400;color:#1c2b33;">7,408</div>
<div class="t" style="left:705px;top:1064.73px;font-size:20.4px;font-weight:400;color:#1c2b33;">7,408</div>
<div class="t" style="left:855px;top:1064.73px;font-size:20.4px;font-weight:400;color:#1c2b33;">1.00</div>
<div class="t" style="left:1005px;top:1064.73px;font-size:20.4px;font-weight:400;color:#1c2b33;">7-day clic...</div>
<div class="t" style="right:764.5px;top:1052.33px;font-size:20.4px;font-weight:400;color:#1c2b33;border-bottom:2px dotted #1c2b33;line-height:1.02;">8</div>
<div class="t" style="right:736.5px;top:1057.80px;font-size:13px;font-weight:400;color:#1c2b33;">[2]</div>
<div class="t" style="left:1155px;top:1081.27px;font-size:17.4px;font-weight:400;color:#465a69;">Website Co...</div>
<div class="t" style="left:1305px;top:1064.73px;font-size:20.4px;font-weight:400;color:#1c2b33;">$38.44</div>
<div class="t" style="right:280px;top:1052.13px;font-size:20.4px;font-weight:400;color:#1c2b33;border-bottom:2px dotted #1c2b33;line-height:1.02;">$4.81</div>
<div class="t" style="right:252.5px;top:1057.80px;font-size:13px;font-weight:400;color:#1c2b33;">[2]</div>
<div class="t" style="right:253px;top:1079.97px;font-size:17.75px;font-weight:400;color:#465a69;">Website Completed Registration</div>
<div class="a" style="left:1789px;top:1041px;width:208px;height:62px;overflow:hidden;"><div class="t" style="left:0.5px;top:23.73px;font-size:20.4px;color:#1c2b33;">May 13, 2025 – Ongoing</div></div>
<div style="position:absolute;left:383px;top:366px;width:5px;height:814px;background:#d7d9de;"></div>
<div style="position:absolute;left:22px;top:1103px;width:1976px;height:2px;background:#d9dadd;"></div>
<div class="t" style="left:40.5px;top:1122.65px;font-size:20.5px;font-weight:700;color:#1c2b33;">Total results</div>
<div class="a" style="left:40px;top:1140px;width:167px;height:40px;overflow:hidden;"><div class="t" style="left:0.5px;top:10.47px;font-size:17.4px;color:#465a69;">10 / 10 rows displayed</div></div>
<div class="t" style="right:1327.4px;top:1120.13px;font-size:20.4px;font-weight:400;color:#1c2b33;">190,420</div>
<div class="t" style="left:552.6px;top:1150.27px;font-size:17.4px;font-weight:400;color:#465a69;">Accounts Cen...</div>
<div class="t" style="right:1178px;top:1120.13px;font-size:20.4px;font-weight:400;color:#1c2b33;">213,003</div>
<div class="t" style="right:1177.8px;top:1150.27px;font-size:17.4px;font-weight:400;color:#465a69;">Total</div>
<div class="t" style="right:1028px;top:1120.13px;font-size:20.4px;font-weight:400;color:#1c2b33;">1.12</div>
<div class="t" style="left:853.1px;top:1150.27px;font-size:17.4px;font-weight:400;color:#465a69;">Per Accounts ...</div>
<div class="t" style="left:1005.5px;top:1134.65px;font-size:20.5px;color:#1c2b33;"><b>Multiple</b> ...</div>
<div style="position:absolute;left:1248px;top:1132px;width:21px;height:1.6px;background:#1c2b33;"></div>
<div class="t" style="right:738px;top:1149.87px;font-size:17.4px;font-weight:400;color:#465a69;">Multiple con...</div>
<div class="t" style="right:548.5999999999999px;top:1120.53px;font-size:20.4px;font-weight:400;color:#1c2b33;">$1,062.34</div>
<div class="t" style="right:548.5999999999999px;top:1150.27px;font-size:17.4px;font-weight:400;color:#465a69;">Total spent</div>
<div style="position:absolute;left:1732px;top:1132px;width:21px;height:1.6px;background:#1c2b33;"></div>
<div class="t" style="right:253px;top:1150.47px;font-size:17.75px;font-weight:400;color:#465a69;">Multiple conversions</div>
<div style="position:absolute;left:1789px;top:1144px;width:21px;height:1.6px;background:#1c2b33;"></div>
<div style="position:absolute;left:28px;top:1185px;width:1917px;height:11px;background:#c1c1c1;border-radius:6px;"></div>
</body></html>
